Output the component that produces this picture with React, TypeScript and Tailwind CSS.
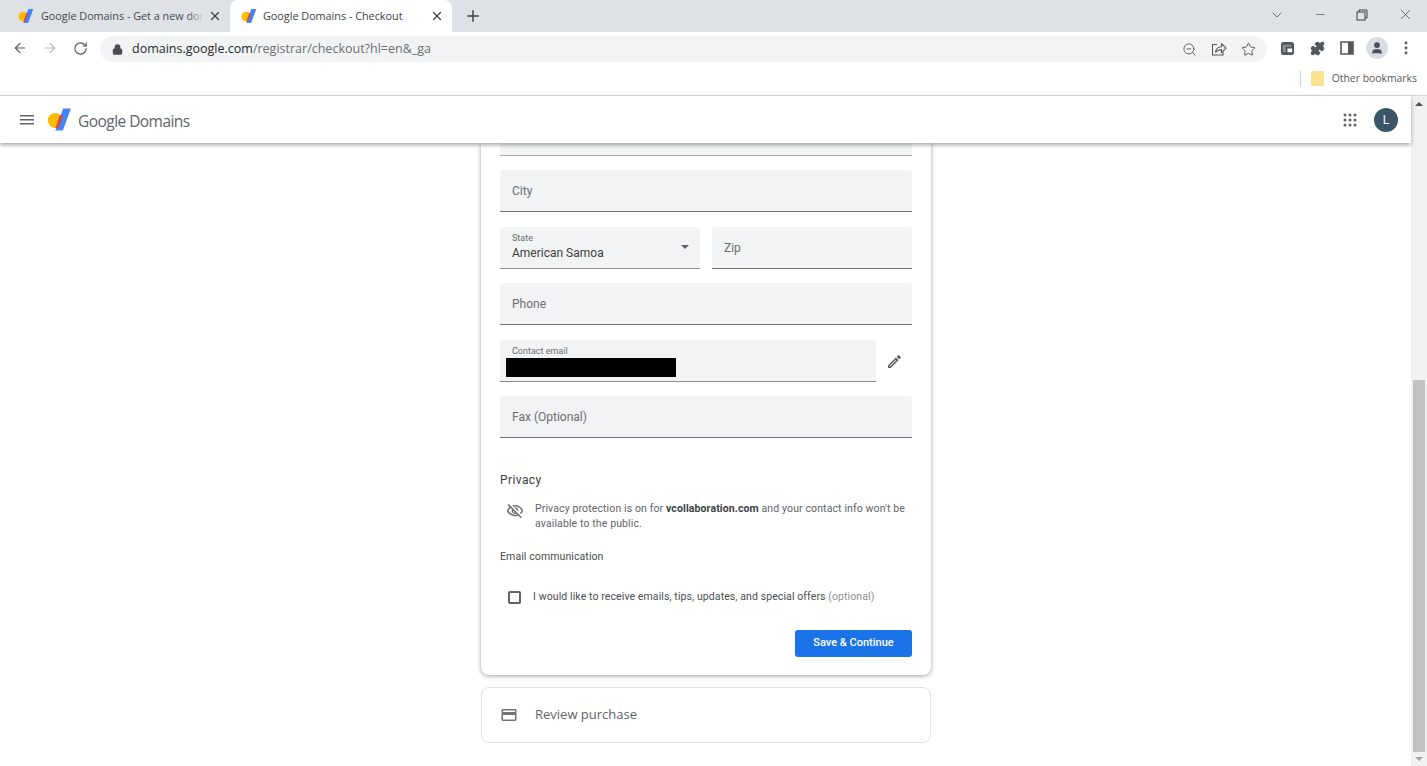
import { ArrowLeft, ArrowRight, RotateCw, Lock, ZoomOut, Star, Puzzle, X, Plus, ChevronDown, Minus, User } from 'lucide-react';

const Logo = ({ size }: { size: number }) => (
  <svg width={size} height={size} viewBox="0 0 24 24">
    <circle cx="8" cy="13" r="7.2" fill="#fbbc04" />
    <path d="M15.5 1.5H23L15.2 22.5H8z" fill="#4285f4" />
    <path d="M12.3 7.5L15.2 8.6 11 19.8 8 20.2C9.5 17 11 12 12.3 7.5z" fill="#ea4335" />
  </svg>
);

const Tab = ({ title, active }: { title: string; active?: boolean }) => (
  <div className={active ? 'relative flex h-[32px] w-[222px] items-center rounded-t-lg bg-white pl-[11px] pr-[8px]' : 'relative flex h-[32px] w-[228px] items-center pl-[18px] pr-[6px]'}>
    <Logo size={16} />
    <span className={active ? 'ml-[6px] flex-1 overflow-hidden whitespace-nowrap text-[10.8px] text-[#3c4043]' : 'relative ml-[7px] w-[163px] overflow-hidden whitespace-nowrap text-[10.8px] text-[#45494d]'}>
      {title}
      {!active && <span className="absolute right-0 top-0 h-full w-[16px] bg-gradient-to-r from-transparent to-[#dee1e6]" />}
    </span>
    <X size={14} strokeWidth={2.2} className={active ? 'ml-[2px] text-[#3c4043]' : 'ml-[4px] text-[#3c4043]'} />
  </div>
);

const Field = ({ label }: { label: string }) => (
  <div className="flex h-[42px] flex-1 items-center rounded-t-[4px] border-b border-[#6f7175] bg-[#f1f3f4] px-[12px] pt-[1px] text-[12px] text-[#6b6e72]">
    {label}
  </div>
);

const App = () => {
  return (
    <div className="flex h-[766px] w-[1427px] flex-col overflow-hidden bg-white font-['Roboto',sans-serif]">
      {/* Browser tab strip */}
      <div className="flex h-[32px] items-center bg-[#dee1e6] font-['Open_Sans',sans-serif]">
        <Tab title="Google Domains - Get a new domain" />
        <div className="w-[2px]" />
        <Tab title="Google Domains - Checkout" active />
        <Plus size={18} strokeWidth={2} className="ml-[12px] text-[#3c4043]" />
        <div className="flex-1" />
        <ChevronDown size={16} strokeWidth={1.2} className="mb-[3px] mr-[29px] text-[#4a4d51]" />
        <Minus size={13} strokeWidth={1.2} className="mb-[3px] mr-[29px] text-[#3c4043]" />
        <svg width="12" height="12" viewBox="0 0 12 12" className="mb-[3px] mr-[29px]" fill="none" stroke="#3c4043" strokeWidth="1">
          <rect x="1" y="3" width="8" height="8" />
          <path d="M3 3V1h8v8H9" />
        </svg>
        <X size={17} strokeWidth={1} className="mb-[3px] mr-[13px] text-[#3c4043]" />
      </div>

      {/* Toolbar */}
      <div className="flex h-[32px] items-center bg-white pl-[12px] font-['Open_Sans',sans-serif]">
        <ArrowLeft size={16} strokeWidth={1.8} className="text-[#54585c]" />
        <ArrowRight size={16} strokeWidth={1.6} className="ml-[14px] text-[#b5b8bb]" />
        <RotateCw size={15} strokeWidth={1.8} className="ml-[15px] text-[#54585c]" />
        <div className="ml-[12px] mt-[2px] flex h-[26px] w-[1167px] items-center rounded-full bg-[#f1f3f4] pl-[12px] pr-[10px]">
          <Lock size={11} strokeWidth={2.5} className="text-[#4a4d51]" fill="#4a4d51" />
          <span className="ml-[9px] whitespace-nowrap text-[12.5px] text-[#26282b]">
            domains.google.com<span className="text-[#6b6e72]">/registrar/checkout?hl=en&amp;_ga</span>
          </span>
          <div className="flex-1" />
          <ZoomOut size={15} strokeWidth={1.5} className="mr-[14px] text-[#54585c]" />
          <svg width="16" height="16" viewBox="0 0 16 16" fill="none" stroke="#54585c" strokeWidth="1.1" strokeLinejoin="round" className="mr-[14px]">
            <path d="M6 3.5H1.5v10.5h10.5v-3" />
            <path d="M4.5 11c.3-3.2 3-5.3 6-5.3V2.5l4.5 4.7-4.5 4.500V8.6c-2.5 0-4.500.8-6 2.400z" />
          </svg>
          <Star size={15} strokeWidth={1.6} className="mr-[1px] text-[#54585c]" />
        </div>
        <svg width="15" height="15" viewBox="0 0 16 16" className="ml-[13px]">
          <rect x="1" y="1" width="14" height="14" rx="3" fill="#53575b" />
          <rect x="8" y="8" width="5" height="4" fill="#fff" />
          <path d="M3 4h9v2H6v6H3z" fill="#8b8f93" />
        </svg>
        <Puzzle size={15} strokeWidth={1.8} fill="#54585c" className="ml-[15px] text-[#54585c]" />
        <svg width="14" height="14" viewBox="0 0 14 14" className="ml-[15px]">
          <path d="M1 1h12v12H1z" fill="#fff" stroke="#54585c" strokeWidth="1.6" />
          <path d="M8 1h5v12H8z" fill="#54585c" />
        </svg>
        <div className="ml-[12px] flex h-[22px] w-[22px] items-center justify-center rounded-full bg-[#dadce5]">
          <User size={14} strokeWidth={2} fill="#4a5058" className="text-[#4a5058]" />
        </div>
        <svg width="4" height="14" viewBox="0 0 4 14" className="ml-[16px]" fill="#54585c">
          <circle cx="2" cy="2" r="1.4" />
          <circle cx="2" cy="7" r="1.4" />
          <circle cx="2" cy="12" r="1.4" />
        </svg>
      </div>

      {/* Bookmarks bar */}
      <div className="flex h-[32px] items-center justify-end border-b border-[#d4d6d8] bg-white pb-[2px] pr-[10px] font-['Open_Sans',sans-serif]">
        <div className="h-[16px] w-px bg-[#cfd1d4]" />
        <svg width="13" height="15" viewBox="0 0 13 15" className="ml-[10px]">
          <rect x="0" y="0" width="13" height="15" rx="1.5" fill="#fde293" />
        </svg>
        <span className="ml-[8px] whitespace-nowrap text-[10.4px] text-[#55595d]">Other bookmarks</span>
      </div>

      <div className="flex min-h-0 flex-1">
        <div className="flex min-w-0 flex-1 flex-col">
          {/* App bar */}
          <div className="relative z-10 flex h-[47px] flex-none items-center bg-white pl-[20px] pr-[13px] shadow-[0_2px_4px_rgba(0,0,0,0.35)]">
            <svg width="14" height="10" viewBox="0 0 14 10" fill="#5f6368">
              <rect y="0" width="14" height="1.5" />
              <rect y="4" width="14" height="1.5" />
              <rect y="8" width="14" height="1.5" />
            </svg>
            <div className="ml-[13px]"><Logo size={25} /></div>
            <span className="ml-[6px] whitespace-nowrap pt-[4px] font-['Open_Sans',sans-serif] text-[15.5px] tracking-[-0.55px] text-[#5f6368]">
              Google Domains
            </span>
            <div className="flex-1" />
            <svg width="14" height="14" viewBox="0 0 14 14" fill="#5f6368" className="mr-[17px]">
              <circle cx="2" cy="2" r="1.5" />
              <circle cx="7" cy="2" r="1.5" />
              <circle cx="12" cy="2" r="1.5" />
              <circle cx="2" cy="7" r="1.5" />
              <circle cx="7" cy="7" r="1.5" />
              <circle cx="12" cy="7" r="1.5" />
              <circle cx="2" cy="12" r="1.5" />
              <circle cx="7" cy="12" r="1.5" />
              <circle cx="12" cy="12" r="1.5" />
            </svg>
            <div className="flex h-[24px] w-[24px] items-center justify-center rounded-full bg-[#3b5566] text-[12px] text-white">L</div>
          </div>

          {/* Page */}
          <div className="flex flex-1 flex-col items-center overflow-hidden pl-[1px]">
            <div className="w-[450px] flex-none rounded-b-lg bg-white px-[19px] pb-[18px] shadow-[0_1px_4px_rgba(60,64,67,0.5)]">
              <div className="h-[13px] border-b border-[#a9a5ab] bg-[#f1f3f4]" />

              <div className="mt-[14px] flex"><Field label="City" /></div>

              <div className="mt-[15px] flex gap-[12px]">
                <div className="relative flex h-[42px] w-[200px] flex-col rounded-t-[4px] border-b border-[#8c8f93] bg-[#f1f3f4] px-[12px] pt-[6px]">
                  <span className="text-[9px] leading-[11px] text-[#6b6e72]">State</span>
                  <span className="mt-[1px] text-[12px] leading-[17px] text-[#3c4043]">American Samoa</span>
                  <div className="absolute right-[11px] top-[18px] h-0 w-0 border-x-[4px] border-t-[4px] border-x-transparent border-t-[#5f6368]" />
                </div>
                <div className="flex flex-1"><Field label="Zip" /></div>
              </div>

              <div className="mt-[14px] flex"><Field label="Phone" /></div>

              <div className="mt-[15px] flex items-center">
                <div className="relative h-[42px] w-[376px] rounded-t-[4px] border-b border-[#8c8f93] bg-[#f1f3f4] px-[12px] pt-[6px]">
                  <div className="text-[9px] leading-[11px] text-[#6b6e72]">Contact email</div>
                  <div className="absolute left-[6px] top-[18px] h-[19px] w-[170px] bg-black" />
                </div>
                <svg width="17" height="17" viewBox="0 0 24 24" fill="#55585c" className="ml-[10px]">
                  <path d="M14.06 9.02l.92.92L5.92 19H5v-.92l9.06-9.06M17.66 3c-.25 0-.51.1-.7.29l-1.83 1.83 3.75 3.75 1.83-1.83c.39-.39.39-1.02 0-1.41l-2.34-2.34c-.2-.2-.45-.29-.71-.29zm-3.6 3.19L3 17.25V21h3.75L17.81 9.94l-3.75-3.75z" />
                </svg>
              </div>

              <div className="mt-[14px] flex"><Field label="Fax (Optional)" /></div>

              <div className="mt-[34px] text-[12px] leading-[16px] tracking-[0.4px] text-[#3c4043]">Privacy</div>

              <div className="mt-[13px] flex items-start">
                <svg width="18" height="18" viewBox="0 0 24 24" fill="#6f7276" className="ml-[6px] mt-[1px]">
                  <path d="M12 6c3.79 0 7.17 2.13 8.82 5.5-.59 1.22-1.42 2.27-2.41 3.12l1.41 1.41c1.39-1.23 2.49-2.77 3.18-4.53C21.27 7.11 17 4 12 4c-1.27 0-2.49.2-3.64.57l1.65 1.65C10.66 6.09 11.32 6 12 6zm-1.07 1.14L13 9.21c.57.25 1.03.71 1.28 1.28l2.07 2.07c.08-.34.14-.7.14-1.07C16.5 9.01 14.48 7 12 7c-.37 0-.72.05-1.07.14zM2.01 3.87l2.68 2.68C3.06 7.83 1.77 9.53 1 11.5 2.73 15.89 7 19 12 19c1.52 0 2.98-.29 4.32-.82l3.42 3.42 1.41-1.41L3.42 2.45 2.01 3.87zm7.5 7.5l2.61 2.61c-.04.01-.08.02-.12.02-1.38 0-2.5-1.12-2.5-2.5 0-.05.01-.08.01-.13zm-3.4-3.4l1.75 1.75c-.23.55-.36 1.15-.36 1.78 0 2.48 2.02 4.5 4.5 4.5.63 0 1.23-.13 1.77-.36l.98.98c-.88.24-1.8.38-2.75.38-3.79 0-7.17-2.13-8.82-5.5.7-1.43 1.72-2.61 2.93-3.53z" />
                </svg>
                <p className="ml-[11px] w-[377px] text-[10.5px] leading-[15px] tracking-[0.12px] text-[#5f6368]">
                  Privacy protection is on for <b className="font-bold text-[#3c4043]">vcollaboration.com</b> and your contact info won't be available to the public.
                </p>
              </div>

              <div className="mt-[19px] text-[10.5px] leading-[14px] tracking-[0.1px] text-[#4a4d51]">Email communication</div>

              <div className="mt-[26px] flex items-center">
                <div className="ml-[8px] h-[13px] w-[13px] rounded-[2px] border-2 border-[#5f6368]" />
                <span className="ml-[12px] whitespace-nowrap text-[10.5px] leading-[14px] tracking-[0.1px] text-[#4a4d51]">
                  I would like to receive emails, tips, updates, and special offers <span className="text-[#8c8f93]">(optional)</span>
                </span>
              </div>

              <div className="mt-[26px] flex justify-end">
                <div className="flex h-[27px] w-[117px] items-center justify-center rounded-[3px] bg-[#1a73e8] text-[11px] font-medium text-white">
                  Save &amp; Continue
                </div>
              </div>
            </div>

            <div className="mt-[12px] flex h-[56px] w-[450px] flex-none items-center rounded-lg border border-[#e0e2e4] bg-white pl-[18px]">
              <svg width="18" height="18" viewBox="0 0 24 24" fill="#707377">
                <path d="M20 4H4c-1.11 0-1.99.89-1.99 2L2 18c0 1.11.89 2 2 2h16c1.11 0 2-.89 2-2V6c0-1.11-.89-2-2-2zm0 14H4v-6h16v6zm0-10H4V6h16v2z" />
              </svg>
              <span className="ml-[17px] font-['Open_Sans',sans-serif] text-[13px] text-[#5f6368]">Review purchase</span>
            </div>
          </div>
        </div>

        {/* Scrollbar */}
        <div className="flex w-[16px] flex-none flex-col items-center bg-[#f1f1f1]">
          <div className="mt-[6px] h-0 w-0 border-x-[4px] border-b-[4px] border-x-transparent border-b-[#505050]" />
          <div className="mt-[274px] h-[372px] w-[12px] bg-[#c1c1c1]" />
          <div className="mt-[5px] h-0 w-0 border-x-[4px] border-t-[4px] border-x-transparent border-t-[#a3a3a3]" />
        </div>
      </div>
    </div>
  );
};

export default App;
